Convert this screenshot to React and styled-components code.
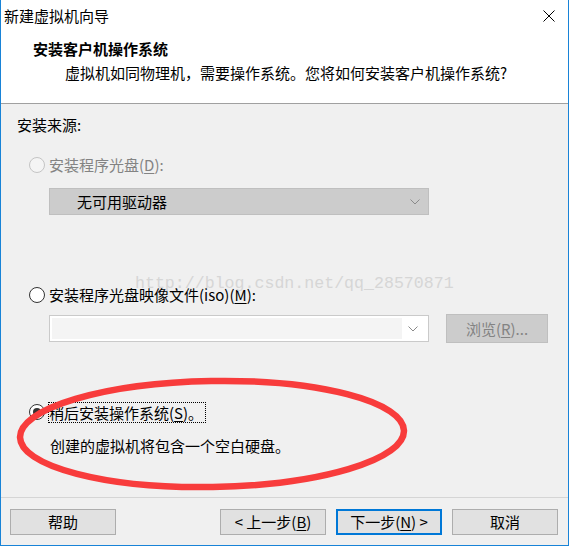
import React from "react";
import styled, { createGlobalStyle } from "styled-components";

const GlobalStyle = createGlobalStyle`
  html, body {
    margin: 0;
    padding: 0;
    background: #ffffff;
  }
  body {
    font-family: "Noto Sans CJK SC", "Noto Sans", sans-serif;
    font-size: 15px;
    color: #000;
  }
`;

const Window = styled.div`
  width: 569px;
  height: 546px;
  box-sizing: border-box;
  border: 1px solid #1883d7;
  border-top: none;
  display: flex;
  flex-direction: column;
  background: #f0f0f0;
`;

const TitleBar = styled.div`
  height: 32px;
  display: flex;
  align-items: center;
  justify-content: space-between;
  padding: 0 13px 0 3px;
  background: #fff;
  line-height: 20px;
`;

const Header = styled.div`
  height: 71px;
  background: #fff;
  border-bottom: 1px solid #a0a0a0;
  padding-top: 7px;
  box-sizing: border-box;
  height: 72px;
`;

const Heading = styled.div`
  font-weight: bold;
  padding-left: 32px;
  line-height: 20px;
`;

const SubHeading = styled.div`
  padding-left: 64px;
  margin-top: 4px;
  line-height: 20px;
`;

const Body = styled.div`
  position: relative;
  flex: 1;
  padding: 11px 0 0 16px;
  display: flex;
  flex-direction: column;
  border-bottom: 1px solid #d5d5d5;
`;

const Line = styled.div`
  line-height: 20px;
  height: 20px;
  margin-top: ${(p) => p.$gap || 0}px;
  padding-left: ${(p) => p.$indent || 0}px;
  color: ${(p) => (p.$disabled ? "#838383" : "#000")};
  display: flex;
  align-items: center;
`;

const RadioDot = styled.span`
  width: 14px;
  height: 14px;
  border-radius: 50%;
  border: 1px solid ${(p) => (p.$disabled ? "#c4c4c4" : "#333")};
  background: ${(p) => (p.$disabled ? "#f4f4f4" : "#fff")};
  margin: 0 4px 0 12px;
  display: flex;
  align-items: center;
  justify-content: center;
  flex-shrink: 0;

  &::after {
    content: "";
    display: ${(p) => (p.$checked ? "block" : "none")};
    width: 8px;
    height: 8px;
    border-radius: 50%;
    background: #333;
  }
`;

const Focus = styled.span`
  outline: 1px dotted #000;
  outline-offset: 0;
  padding: 0 2px 0 0;
  line-height: 19px;
`;

const Key = styled.u`
  text-underline-offset: 2px;
`;

const Row = styled.div`
  display: flex;
  align-items: center;
  margin-top: ${(p) => p.$gap || 0}px;
  padding-left: 32px;
  height: 29px;
`;

const Combo = styled.div`
  width: 380px;
  height: 27px;
  box-sizing: border-box;
  border: 1px solid ${(p) => (p.$disabled ? "#bfbfbf" : "#cacaca")};
  background: ${(p) => (p.$disabled ? "#cccccc" : "#fff")};
  display: flex;
  align-items: stretch;
  padding: ${(p) => (p.$disabled ? "0" : "2px")};
`;

const ComboField = styled.div`
  flex: 1;
  display: flex;
  align-items: center;
  padding-left: ${(p) => (p.$text ? 27 : 0)}px;
  background: ${(p) => (p.$text ? "transparent" : "#f4f4f4")};
  line-height: 20px;
`;

const ComboArrow = styled.div`
  width: 22px;
  display: flex;
  align-items: center;
  justify-content: center;
  padding-right: 2px;
`;

const GrayButton = styled.div`
  width: 102px;
  height: 29px;
  box-sizing: border-box;
  margin-left: 17px;
  border: 1px solid #bfbfbf;
  background: #cccccc;
  color: #838383;
  display: flex;
  align-items: center;
  justify-content: center;
  line-height: 20px;
`;

const Watermark = styled.div`
  position: absolute;
  left: 134px;
  top: 170px;
  font-family: "Liberation Mono", monospace;
  font-size: 16.6px;
  color: #d6d6d6;
  line-height: 20px;
  pointer-events: none;
`;

const Circle = styled.svg`
  position: absolute;
  left: 13px;
  top: 268px;
  pointer-events: none;
`;

const Footer = styled.div`
  height: 47px;
  box-sizing: border-box;
  padding: 11px 9px 0 9px;
  display: flex;
  align-items: flex-start;
`;

const Button = styled.div`
  width: 106px;
  height: 26px;
  box-sizing: border-box;
  border: ${(p) => (p.$default ? "2px solid #0078d7" : "1px solid #adadad")};
  background: #e1e1e1;
  display: flex;
  align-items: center;
  justify-content: center;
  line-height: 20px;
  margin-left: ${(p) => p.$gap || 0}px;
`;

const Chevron = () => (
  <svg width="10" height="6" viewBox="0 0 10 6">
    <polyline points="0.5,0.5 5,5 9.5,0.5" fill="none" stroke="#8a8a8a" strokeWidth="1" />
  </svg>
);

const CloseIcon = () => (
  <svg width="12" height="12" viewBox="0 0 12 12">
    <path d="M0.5 0.5 L11.5 11.5 M11.5 0.5 L0.5 11.5" stroke="#000" strokeWidth="1" />
  </svg>
);

export default function App() {
  return (
    <>
      <GlobalStyle />
      <Window>
        <TitleBar>
          <span>新建虚拟机向导</span>
          <CloseIcon />
        </TitleBar>
        <Header>
          <Heading>安装客户机操作系统</Heading>
          <SubHeading>虚拟机如同物理机，需要操作系统。您将如何安装客户机操作系统?</SubHeading>
        </Header>
        <Body>
          <Line>安装来源:</Line>

          <Line $gap={20} $disabled>
            <RadioDot $disabled />
            安装程序光盘(<Key>D</Key>):
          </Line>
          <Row $gap={12}>
            <Combo $disabled>
              <ComboField $text>无可用驱动器</ComboField>
              <ComboArrow>
                <Chevron />
              </ComboArrow>
            </Combo>
          </Row>

          <Line $gap={69}>
            <RadioDot />
            安装程序光盘映像文件(iso)(<Key>M</Key>):
          </Line>
          <Row $gap={9}>
            <Combo>
              <ComboField />
              <ComboArrow>
                <Chevron />
              </ComboArrow>
            </Combo>
            <GrayButton>
              浏览(<Key>R</Key>)...
            </GrayButton>
          </Row>

          <Line $gap={59}>
            <RadioDot $checked />
            <Focus>
              稍后安装操作系统(<Key>S</Key>)。
            </Focus>
          </Line>
          <Line $gap={14} $indent={33}>
            创建的虚拟机将包含一个空白硬盘。
          </Line>

          <Watermark>http://blog.csdn.net/qq_28570871</Watermark>
          <Circle width="402" height="124" viewBox="0 0 402 124">
            <ellipse
              cx="198"
              cy="62"
              rx="192"
              ry="53"
              fill="none"
              stroke="#f83c3c"
              strokeWidth="6.5"
              transform="rotate(-1 198 62)"
            />
          </Circle>
        </Body>
        <Footer>
          <Button>帮助</Button>
          <Button $gap={104}>
            &lt; 上一步(<Key>B</Key>)
          </Button>
          <Button $gap={10} $default>
            下一步(<Key>N</Key>) &gt;
          </Button>
          <Button $gap={10}>取消</Button>
        </Footer>
      </Window>
    </>
  );
}
